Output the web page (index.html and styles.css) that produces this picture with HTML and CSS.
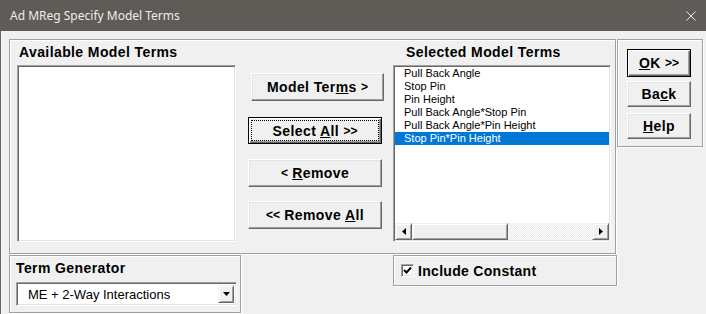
FILE: index.html
```html
<!DOCTYPE html>
<html lang="en">
  <head>
    <meta charset="UTF-8" />
    <meta name="viewport" content="width=device-width, initial-scale=1.0" />
    <title>Ad MReg Specify Model Terms</title>
    <link rel="stylesheet" href="styles.css">
  </head>
  <body>
    <!-- Title bar -->
    <div class="titlebar">
      <span class="title">Ad MReg Specify Model Terms</span>
      <svg class="close" width="10" height="10" viewBox="0 0 10 10">
        <path d="M0.5 0.5 L9.5 9.5 M9.5 0.5 L0.5 9.5" stroke="#e8e8e8" stroke-width="1" fill="none" />
      </svg>
    </div>

    <div class="client">
      <div class="top-row">
        <!-- Main frame -->
        <div class="frame main-frame">
          <div class="col-available">
            <div class="heading">Available Model Terms</div>
            <div class="listbox"></div>
          </div>

          <div class="col-buttons">
            <button class="btn btn-model"><span>Model Ter<u>m</u>s <span class="arr">&gt;</span></span></button>
            <button class="btn btn-default btn-select"><span class="focus"><span>Select <u>A</u>ll <span class="arr">&gt;&gt;</span></span></span></button>
            <button class="btn btn-remove"><span><span class="arr">&lt;</span> <u>R</u>emove</span></button>
            <button class="btn btn-remove-all"><span><span class="arr">&lt;&lt;</span> Remove <u>A</u>ll</span></button>
          </div>

          <div class="col-selected">
            <div class="heading heading-selected">Selected Model Terms</div>
            <div class="listbox listbox-selected">
              <ul class="items">
                <li>Pull Back Angle</li>
                <li>Stop Pin</li>
                <li>Pin Height</li>
                <li>Pull Back Angle*Stop Pin</li>
                <li>Pull Back Angle*Pin Height</li>
                <li class="selected">Stop Pin*Pin Height</li>
              </ul>
              <div class="hscroll">
                <div class="sb-btn">
                  <svg width="4" height="7" viewBox="0 0 4 7"><polygon points="4,0 0,3.5 4,7" fill="#000" /></svg>
                </div>
                <div class="sb-thumb"></div>
                <div class="sb-track"></div>
                <div class="sb-btn">
                  <svg width="4" height="7" viewBox="0 0 4 7"><polygon points="0,0 4,3.5 0,7" fill="#000" /></svg>
                </div>
              </div>
            </div>
          </div>
        </div>

        <!-- Side frame -->
        <div class="frame side-frame">
          <button class="btn btn-default btn-ok"><span><u>O</u>K <span class="arr">&gt;&gt;</span></span></button>
          <button class="btn btn-back"><span>Ba<u>c</u>k</span></button>
          <button class="btn btn-help"><span><u>H</u>elp</span></button>
        </div>
      </div>

      <div class="bottom-row">
        <!-- Term generator -->
        <div class="frame term-frame">
          <div class="heading term-heading">Term Generator</div>
          <div class="combo">
            <span class="combo-text">ME + 2-Way Interactions</span>
            <div class="combo-btn">
              <svg width="7" height="4" viewBox="0 0 7 4"><polygon points="0,0 7,0 3.5,4" fill="#000" /></svg>
            </div>
          </div>
        </div>

        <!-- Include constant -->
        <div class="frame check-frame">
          <span class="checkbox">
            <svg width="9" height="9" viewBox="0 0 9 9">
              <path d="M1 4 L3.5 6.5 L8 1.5" stroke="#000" stroke-width="2" fill="none" />
            </svg>
          </span>
          <span class="check-label">Include Constant</span>
        </div>
      </div>
    </div>
  </body>
</html>
```

FILE: styles.css
```css
body {
  margin: 0;
  width: 706px;
  height: 314px;
  overflow: hidden;
  background-color: #f0f0f0;
  font-family: "Liberation Sans", Arial, sans-serif;
  color: #000;
}
.titlebar {
  height: 31px;
  background-color: #5f5b57;
  display: flex;
  align-items: center;
  justify-content: space-between;
  padding: 0 10px;
  color: #ededed;
  font-family: "Noto Sans", "Open Sans", sans-serif;
  font-size: 12px;
}
.close {
  display: block;
}
.client {
  height: 283px;
  box-sizing: border-box;
  border-left: 1px solid #6a6662;
  padding: 8px 0 0 8px;
}
.frame {
  box-sizing: border-box;
  border: 1px solid #a0a0a0;
  box-shadow: inset 1px 1px #fff, 1px 1px #fff;
}
.top-row {
  display: flex;
  align-items: flex-start;
  gap: 1px;
}
.main-frame {
  width: 607px;
  height: 215px;
  display: flex;
  align-items: flex-start;
  padding: 4px 0 0 7px;
}
.col-available {
  width: 219px;
}
.heading {
  height: 16px;
  line-height: 16px;
  font-size: 14px;
  font-weight: bold;
  letter-spacing: 0.4px;
  white-space: nowrap;
  padding-left: 2px;
  margin-bottom: 5px;
}
.heading-selected {
  padding-left: 13px;
}
.listbox {
  box-sizing: border-box;
  height: 177px;
  background-color: #fff;
  border: 1px solid;
  border-color: #a0a0a0 #fff #fff #a0a0a0;
  box-shadow: inset 1px 1px #696969, inset -1px -1px #e3e3e3;
}

/* Buttons */
.btn {
  box-sizing: border-box;
  display: flex;
  align-items: center;
  justify-content: center;
  padding: 0;
  background-color: #f0f0f0;
  border: 1px solid;
  border-color: #fff #696969 #696969 #fff;
  box-shadow: inset -1px -1px #a0a0a0, inset 1px 1px #e3e3e3;
  font-family: "Liberation Sans", Arial, sans-serif;
  font-size: 14px;
  font-weight: bold;
  letter-spacing: 0.4px;
  color: #000;
  white-space: nowrap;
}
.btn u {
  text-underline-offset: 1px;
}
.btn-default {
  border-color: #000;
  box-shadow: inset 1px 1px #fff, inset -1px -1px #696969, inset -2px -2px #a0a0a0;
}
.arr {
  font-size: 12px;
  letter-spacing: 0;
  position: relative;
  top: -1px;
}
.focus {
  flex: 1;
  align-self: stretch;
  margin: 2px;
  border: 1px dotted #000;
  display: flex;
  align-items: center;
  justify-content: center;
}
.col-buttons {
  width: 136px;
  margin-left: 12px;
  padding-top: 29px;
  display: flex;
  flex-direction: column;
  align-items: flex-start;
}
.col-buttons .btn {
  width: 134px;
  height: 28px;
}
.col-buttons .btn-model {
  width: 133px;
  margin-left: 3px;
}
.col-buttons .btn-select {
  height: 27px;
  margin-top: 16px;
}
.col-buttons .btn-remove {
  margin-top: 15px;
}
.col-buttons .btn-remove-all {
  margin-top: 14px;
}

/* Selected terms list */
.col-selected {
  width: 218px;
  margin-left: 9px;
}
.listbox-selected {
  display: flex;
  flex-direction: column;
  padding: 1px;
}
.items {
  flex: 1;
  list-style: none;
  margin: 0;
  padding: 0;
}
.items li {
  height: 13px;
  line-height: 13px;
  font-size: 11px;
  padding-left: 9px;
  white-space: nowrap;
}
.items li.selected {
  background-color: #0078d7;
  color: #fff;
}
.hscroll {
  display: flex;
  height: 17px;
}
.sb-btn,
.sb-thumb {
  box-sizing: border-box;
  background-color: #f0f0f0;
  border: 1px solid;
  border-color: #f0f0f0 #696969 #696969 #f0f0f0;
  box-shadow: inset 1px 1px #fff, inset -1px -1px #a0a0a0;
}
.sb-btn {
  width: 17px;
  display: flex;
  align-items: center;
  justify-content: center;
}
.sb-btn svg {
  display: block;
}
.sb-thumb {
  width: 96px;
}
.sb-track {
  flex: 1;
  background: repeating-conic-gradient(#fff 0 25%, #e8e8e8 0 50%) 0 0 / 2px 2px;
}

/* Side buttons */
.side-frame {
  width: 86px;
  height: 108px;
  padding: 9px 0 0 9px;
  display: flex;
  flex-direction: column;
}
.side-frame .btn {
  width: 64px;
  height: 26px;
}
.side-frame .btn-ok {
  height: 28px;
}
.side-frame .btn-back {
  margin-top: 4px;
}
.side-frame .btn-help {
  margin-top: 6px;
}

/* Bottom row */
.bottom-row {
  display: flex;
  align-items: flex-start;
  margin-top: 1px;
}
.term-frame {
  width: 232px;
  height: 58px;
  padding: 4px 0 0 6px;
}
.term-heading {
  padding-left: 0;
  margin-bottom: 6px;
}
.combo {
  box-sizing: border-box;
  width: 221px;
  height: 24px;
  display: flex;
  align-items: center;
  justify-content: space-between;
  background-color: #fff;
  border: 1px solid;
  border-color: #a0a0a0 #fff #fff #a0a0a0;
  box-shadow: inset 1px 1px #696969, inset -1px -1px #e3e3e3;
  padding: 0 2px 0 11px;
}
.combo-text {
  font-size: 13px;
  white-space: nowrap;
}
.combo-btn {
  box-sizing: border-box;
  width: 16px;
  height: 18px;
  display: flex;
  align-items: center;
  justify-content: center;
  background-color: #f0f0f0;
  border: 1px solid;
  border-color: #f0f0f0 #696969 #696969 #f0f0f0;
  box-shadow: inset 1px 1px #fff, inset -1px -1px #a0a0a0;
}
.combo-btn svg {
  display: block;
}
.check-frame {
  width: 224px;
  height: 31px;
  margin-left: 152px;
  display: flex;
  align-items: center;
  padding-left: 7px;
}
.checkbox {
  box-sizing: border-box;
  width: 13px;
  height: 13px;
  display: flex;
  align-items: center;
  justify-content: center;
  background-color: #fff;
  border: 1px solid;
  border-color: #a0a0a0 #fff #fff #a0a0a0;
  box-shadow: inset 1px 1px #696969, inset -1px -1px #e3e3e3;
}
.check-label {
  margin-left: 4px;
  font-size: 14px;
  font-weight: bold;
  letter-spacing: 0.3px;
  white-space: nowrap;
}
```
